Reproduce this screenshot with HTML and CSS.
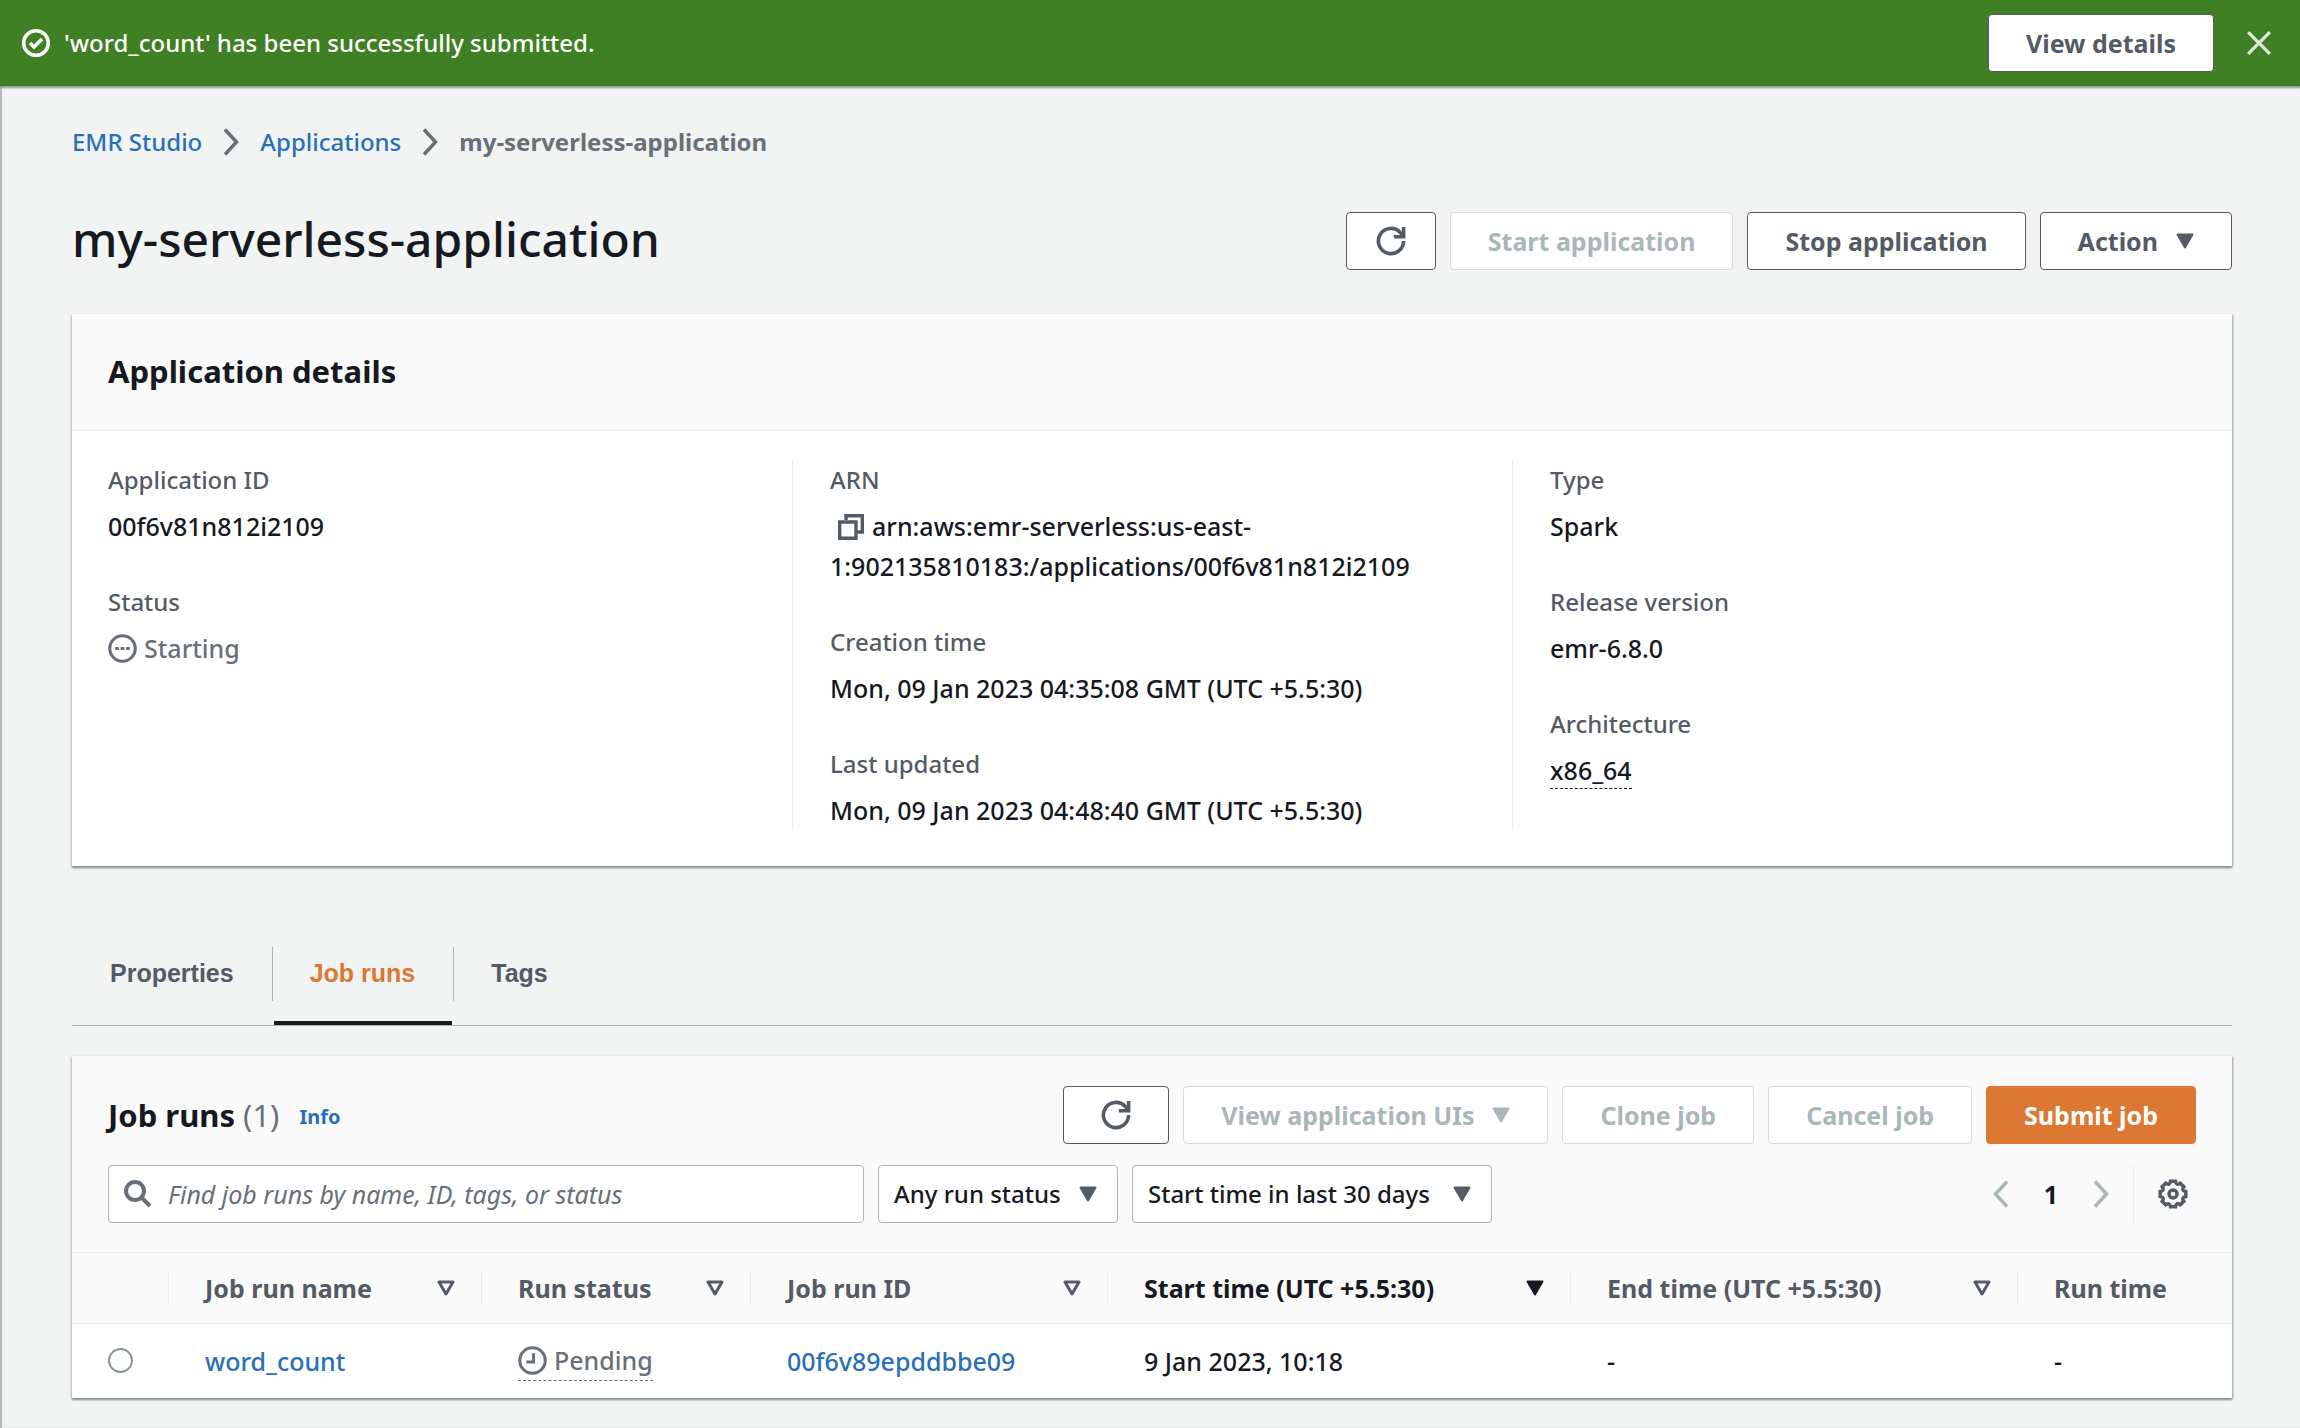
FILE: index.html
```html
<!DOCTYPE html>
<html lang="en">
<head>
<meta charset="utf-8">
<title>my-serverless-application - EMR Studio</title>
<link rel="stylesheet" href="styles.css">
</head>
<body>
<svg class="sprite" aria-hidden="true">
  <symbol id="refresh" viewBox="0 0 16 16"><path d="M14.300 8A6.300 6.300 0 1 1 12.600 3.700L14.300 5.400M14.300 1v4.900H9.400" fill="none" stroke="currentColor" stroke-width="1.800"/></symbol>
  <symbol id="caret" viewBox="0 0 18 16"><path d="M1.500 1.500h15L9 14.500z" fill="currentColor" stroke="currentColor" stroke-width="2" stroke-linejoin="round"/></symbol>
  <symbol id="caret-open" viewBox="0 0 18 16"><path d="M2 2h14L9 14z" fill="none" stroke="currentColor" stroke-width="3" stroke-linejoin="round"/></symbol>
  <symbol id="chevron" viewBox="0 0 16 28"><path d="M2 1.500L13.500 14 2 26.500" fill="none" stroke="currentColor" stroke-width="3.500"/></symbol>
</svg>

<div class="flash" role="status">
  <svg class="flash-icon" viewBox="0 0 28 28"><circle cx="14" cy="14" r="12.300"/><path d="M8 14l4 4 8-8"/></svg>
  <p class="flash-text">'word_count' has been successfully submitted.</p>
  <button class="btn" type="button">View details</button>
  <button class="close" type="button" aria-label="Dismiss"><svg viewBox="0 0 24 24"><path d="M2 2l20 20M22 2L2 22"/></svg></button>
</div>

<main class="page">
  <nav class="crumbs" aria-label="Breadcrumb">
    <a href="#">EMR Studio</a>
    <svg class="crumb-sep"><use href="#chevron"/></svg>
    <a href="#">Applications</a>
    <svg class="crumb-sep"><use href="#chevron"/></svg>
    <span class="crumb-current">my-serverless-application</span>
  </nav>

  <header class="title-row">
    <h1>my-serverless-application</h1>
    <div class="actions">
      <button class="btn btn-icon" type="button" aria-label="Refresh"><svg class="icon-refresh"><use href="#refresh"/></svg></button>
      <button class="btn" type="button" disabled>Start application</button>
      <button class="btn" type="button">Stop application</button>
      <button class="btn" type="button">Action <svg class="caret"><use href="#caret"/></svg></button>
    </div>
  </header>

  <section class="panel">
    <div class="panel-head"><h2>Application details</h2></div>
    <div class="details">
      <dl class="detail-col">
        <div><dt>Application ID</dt><dd>00f6v81n812i2109</dd></div>
        <div><dt>Status</dt><dd class="status"><svg class="status-icon" viewBox="0 0 28 28"><circle cx="14" cy="14" r="12.300"/><path d="M7 14h3.500M12.200 14h3.500M17.500 14H21"/></svg>Starting</dd></div>
      </dl>
      <dl class="detail-col">
        <div><dt>ARN</dt><dd><button class="copy" type="button" aria-label="Copy ARN"><svg viewBox="0 0 26 26"><path d="M8 6V1.700h16.300V18H19M1.700 8H18v16.300H1.700z"/></svg></button>arn:aws:emr-serverless:us-east-<br>1:902135810183:/applications/00f6v81n812i2109</dd></div>
        <div><dt>Creation time</dt><dd>Mon, 09 Jan 2023 04:35:08 GMT (UTC +5.5:30)</dd></div>
        <div><dt>Last updated</dt><dd>Mon, 09 Jan 2023 04:48:40 GMT (UTC +5.5:30)</dd></div>
      </dl>
      <dl class="detail-col">
        <div><dt>Type</dt><dd>Spark</dd></div>
        <div><dt>Release version</dt><dd>emr-6.8.0</dd></div>
        <div><dt>Architecture</dt><dd><span class="hint arch">x86_64</span></dd></div>
      </dl>
    </div>
  </section>

  <div class="tabs" role="tablist">
    <button class="tab" type="button" role="tab" aria-selected="false">Properties</button>
    <button class="tab" type="button" role="tab" aria-selected="true">Job runs</button>
    <button class="tab" type="button" role="tab" aria-selected="false">Tags</button>
  </div>

  <section class="panel jobs">
    <div class="jobs-head">
      <h2>Job runs <span class="count">(1)</span></h2>
      <a class="info" href="#">Info</a>
      <div class="actions">
        <button class="btn btn-icon wide" type="button" aria-label="Refresh job runs"><svg class="icon-refresh"><use href="#refresh"/></svg></button>
        <button class="btn" type="button" disabled>View application UIs <svg class="caret"><use href="#caret"/></svg></button>
        <button class="btn" type="button" disabled>Clone job</button>
        <button class="btn" type="button" disabled>Cancel job</button>
        <button class="btn primary" type="button">Submit job</button>
      </div>
    </div>

    <div class="filters">
      <div class="search">
        <svg viewBox="0 0 28 28"><circle cx="11" cy="11" r="9"/><path d="M17.500 17.500L26 26"/></svg>
        <input type="search" aria-label="Find job runs" placeholder="Find job runs by name, ID, tags, or status">
      </div>
      <div class="select status-select">
        <select aria-label="Run status"><option>Any run status</option></select>
        <svg class="caret"><use href="#caret"/></svg>
      </div>
      <div class="select time-select">
        <select aria-label="Start time"><option>Start time in last 30 days</option></select>
        <svg class="caret"><use href="#caret"/></svg>
      </div>
      <div class="pager">
        <button type="button" aria-label="Previous page" disabled><svg class="chev prev"><use href="#chevron"/></svg></button>
        <button class="page-num" type="button" aria-current="page">1</button>
        <button type="button" aria-label="Next page" disabled><svg class="chev"><use href="#chevron"/></svg></button>
      </div>
      <button class="gear" type="button" aria-label="Preferences"><svg viewBox="-15 -15 30 30"><path d="M12.800-2.500V2.500Q7.900 3.300 10.800 7.300L7.300 10.800Q3.300 7.900 2.500 12.800H-2.500Q-3.300 7.900-7.300 10.800L-10.800 7.300Q-7.900 3.300-12.800 2.500V-2.500Q-7.900-3.300-10.800-7.300L-7.300-10.800Q-3.300-7.900-2.500-12.800H2.500Q3.300-7.900 7.300-10.800L10.800-7.300Q7.900-3.300 12.800-2.500Z"/><circle r="4"/></svg></button>
    </div>

    <table class="runs">
      <colgroup><col class="c-pick"><col class="c-name"><col class="c-status"><col class="c-id"><col class="c-start"><col class="c-end"><col></colgroup>
      <thead>
        <tr>
          <th><div class="th"></div></th>
          <th scope="col"><div class="th">Job run name <svg class="caret"><use href="#caret-open"/></svg></div></th>
          <th scope="col"><div class="th">Run status <svg class="caret"><use href="#caret-open"/></svg></div></th>
          <th scope="col"><div class="th">Job run ID <svg class="caret"><use href="#caret-open"/></svg></div></th>
          <th scope="col" class="sorted" aria-sort="descending"><div class="th">Start time (UTC +5.5:30) <svg class="caret"><use href="#caret"/></svg></div></th>
          <th scope="col"><div class="th">End time (UTC +5.5:30) <svg class="caret"><use href="#caret-open"/></svg></div></th>
          <th scope="col"><div class="th">Run time</div></th>
        </tr>
      </thead>
      <tbody>
        <tr>
          <td class="pick"><input type="radio" name="run" aria-label="Select word_count"></td>
          <td><a href="#">word_count</a></td>
          <td><span class="hint status"><svg class="status-icon" viewBox="0 0 28 28"><circle cx="14" cy="14" r="12.300"/><path d="M15 7v8.500H8"/></svg>Pending</span></td>
          <td><a href="#">00f6v89epddbbe09</a></td>
          <td>9 Jan 2023, 10:18</td>
          <td>-</td>
          <td>-</td>
        </tr>
      </tbody>
    </table>
  </section>
</main>
</body>
</html>
```
FILE: styles.css
```css
* { box-sizing: border-box; }

body {
  margin: 0;
  min-height: 100vh;
  background: #f2f3f3;
  box-shadow: inset 2px 0 1px #b4b9bb;
  color: #16191f;
  font: 500 25px/40px "Noto Sans", "Open Sans", sans-serif;
}

h1, h2, p, dl, dd { margin: 0; }
a { color: #2a6fb8; text-decoration: none; }
svg { flex: none; }
button, input, select { font: inherit; color: inherit; }
.sprite { display: none; }

/* Notification bar */
.flash {
  display: flex;
  align-items: center;
  height: 86px;
  padding: 0 28px 0 22px;
  background: #3e8023;
  box-shadow: 0 1px 2px 1px #8a9498;
  color: #fff;
}
.flash-icon {
  width: 28px;
  height: 28px;
  margin-right: 14px;
  fill: none;
  stroke: currentColor;
  stroke-width: 3.5;
}
.flash-text { flex: 1; font-size: 24px; }
.close {
  display: flex;
  margin-left: 32px;
  padding: 0;
  border: 0;
  background: none;
  color: #dfe8db;
}
.close svg { width: 26px; height: 26px; stroke: currentColor; stroke-width: 3; }

/* Buttons */
.btn {
  display: inline-flex;
  align-items: center;
  justify-content: center;
  gap: 18px;
  height: 58px;
  padding: 0 37px;
  border: 1px solid #545b64;
  border-radius: 4px;
  background: #fff;
  color: #545b64;
  font-weight: 700;
  white-space: nowrap;
}
.btn:disabled { border-color: #d5dbdb; color: #aab7b8; }
.btn-icon { width: 90px; padding: 0; }
.btn-icon.wide { width: 106px; }
.btn.primary { border-color: #dd7833; background: #dd7833; color: #fff; }
.icon-refresh { width: 32px; height: 32px; }
.caret { width: 18px; height: 16px; }
.actions { display: flex; gap: 14px; margin-left: auto; }

/* Page header */
.page { padding: 36px 68px 28px 72px; }
.crumbs { display: flex; align-items: center; gap: 21px; font-size: 24px; }
.crumb-sep { width: 16px; height: 28px; color: #687078; }
.crumb-current { color: #687078; font-weight: 700; }
.title-row { display: flex; align-items: center; margin: 47px 0 41px; }
h1 { padding-bottom: 4px; font-size: 48px; line-height: 60px; font-weight: 500; }
h2 { font-size: 31px; line-height: 40px; font-weight: 700; }

/* Panels */
.panel { background: #fff; box-shadow: 0 2px 2px #879596, 1px 1px 2px #aab7b8, -1px 1px 2px #d5dbdb; }
.panel-head {
  padding: 37px 36px 39px;
  border-bottom: 1px solid #eaeded;
  background: #fafafa;
}
.details { display: grid; grid-template-columns: repeat(3, 1fr); padding: 29px 0 36px; }
.detail-col { display: flex; flex-direction: column; gap: 36px; padding: 0 36px; }
.detail-col + .detail-col { border-left: 1px solid #eaeded; padding-left: 37px; }
dt { margin-bottom: 6px; color: #545b64; font-size: 24px; }
.status { color: #687078; }
.status-icon {
  width: 29px;
  height: 29px;
  margin-right: 7px;
  vertical-align: -5px;
  fill: none;
  stroke: currentColor;
  stroke-width: 3;
}
.copy { padding: 0; margin: 0 8px; border: 0; background: none; color: #545b64; line-height: 26px; }
.copy svg { width: 26px; height: 26px; vertical-align: -4px; fill: none; stroke: currentColor; stroke-width: 3.4; }
.hint { display: inline-block; border-bottom: 1px dashed currentColor; }
.arch { line-height: 36px; }

/* Tabs */
.tabs { display: flex; margin-top: 79px; border-bottom: 1px solid #aab7b8; }
.tab {
  position: relative;
  height: 80px;
  padding: 0 38px 24px;
  border: 0;
  background: none;
  color: #545b64;
  font-family: "Liberation Sans", Arial, sans-serif;
  font-weight: 700;
}
.tab + .tab::before {
  content: "";
  position: absolute;
  top: 2px;
  left: 0;
  height: 54px;
  border-left: 1px solid #aab7b8;
}
.tab[aria-selected="true"] { color: #dd7833; }
.tab[aria-selected="true"]::after {
  content: "";
  position: absolute;
  right: 1px;
  bottom: 0;
  left: 2px;
  height: 4px;
  background: #16191f;
}

/* Job runs */
.jobs { margin-top: 30px; }
.jobs-head { display: flex; align-items: center; padding: 30px 36px 0; background: #fafafa; }
.count { color: #687078; font-weight: 400; }
.info { margin: 4px 0 0 20px; font-size: 20px; font-weight: 700; }
.filters {
  display: flex;
  align-items: center;
  gap: 14px;
  padding: 21px 36px 29px;
  border-bottom: 1px solid #eaeded;
  background: #fafafa;
}
.search, .select {
  display: flex;
  align-items: center;
  height: 58px;
  border: 1px solid #aab7b8;
  border-radius: 4px;
  background: #fff;
}
.search { flex: 0 1 756px; padding: 0 15px; }
.search svg { width: 28px; height: 28px; margin-right: 16px; fill: none; stroke: #687078; stroke-width: 4; }
.search input { flex: 1; min-width: 0; padding: 0; border: 0; outline: 0; background: none; appearance: none; font-weight: 400; }
.search input::placeholder { color: #687078; font-style: italic; opacity: 1; }
.select { position: relative; }
.select select {
  width: 100%;
  height: 100%;
  padding: 0 15px;
  border: 0;
  background: none;
  appearance: none;
  font-size: 24px;
}
.select .caret { position: absolute; right: 20px; color: #545b64; pointer-events: none; }
.status-select { width: 240px; }
.time-select { width: 360px; }
.pager { display: flex; gap: 24px; margin-left: auto; padding-right: 10px; }
.pager button { display: flex; align-items: center; padding: 0; border: 0; background: none; color: #aab7b8; }
.pager .page-num { width: 36px; justify-content: center; color: #16191f; font-weight: 700; }
.chev { width: 16px; height: 28px; }
.prev { transform: scaleX(-1); }
.gear {
  display: flex;
  align-items: center;
  height: 58px;
  padding: 0 8px 0 24px;
  border: 0;
  border-left: 1px solid #eaeded;
  background: none;
  color: #545b64;
}
.gear svg { width: 30px; height: 30px; fill: none; stroke: currentColor; stroke-width: 3.5; }

.runs { width: 100%; table-layout: fixed; border-collapse: collapse; }
.c-pick { width: 97px; }
.c-name { width: 313px; }
.c-status { width: 269px; }
.c-id { width: 357px; }
.c-start { width: 463px; }
.c-end { width: 447px; }
.runs thead { background: #fafafa; border-bottom: 1px solid #eaeded; }
th { padding: 18px 0; color: #545b64; text-align: left; white-space: nowrap; }
.th {
  display: flex;
  align-items: center;
  justify-content: space-between;
  height: 34px;
  padding: 0 26px 0 36px;
  border-right: 1px solid #eaeded;
}
th:last-child .th { border-right: 0; }
.sorted { color: #16191f; }
td { height: 74px; padding: 0 36px; }
.pick input {
  display: block;
  width: 25px;
  height: 25px;
  margin: 0;
  border: 2px solid #879596;
  border-radius: 50%;
  background: #fff;
  appearance: none;
}
```
